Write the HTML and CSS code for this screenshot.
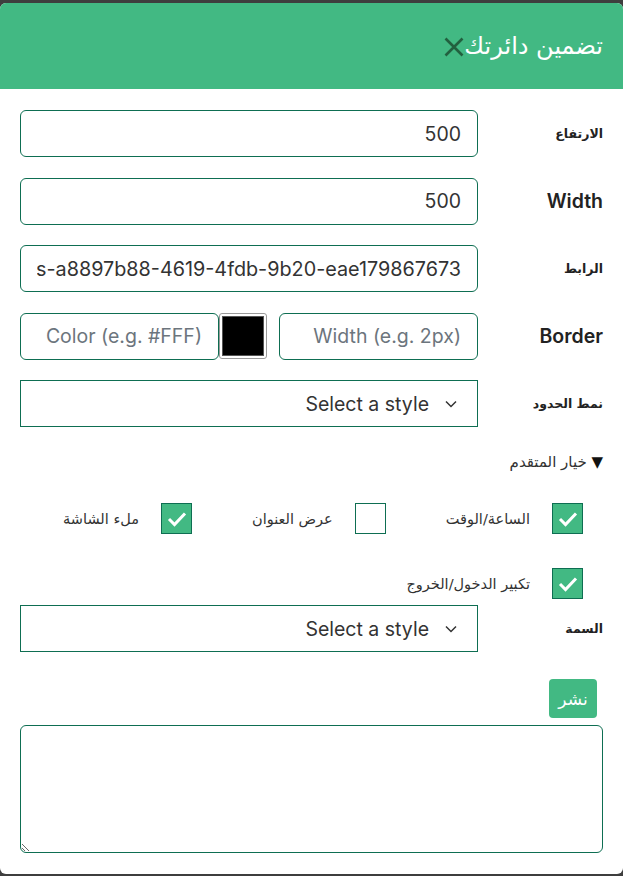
FILE: index.html
```html
<!DOCTYPE html>
<html lang="ar" dir="rtl">
<head>
<meta charset="utf-8">
<title>تضمين دائرتك</title>
<link rel="stylesheet" href="styles.css">
</head>
<body>
<div class="modal">
  <header class="modal-header">
    <h2 class="modal-title">تضمين دائرتك</h2>
    <button class="close-btn" type="button" aria-label="close">
      <svg width="20" height="20" viewBox="0 0 20 20"><path d="M1.5 1.5 L18.5 18.5 M18.5 1.5 L1.5 18.5" stroke="#22603f" stroke-width="2.6" fill="none"/></svg>
    </button>
  </header>
  <div class="modal-body">
    <div class="form-row">
      <label class="label label-ar">الارتفاع</label>
      <div class="field"><input class="input" type="text" value="500"></div>
    </div>
    <div class="form-row">
      <label class="label label-en">Width</label>
      <div class="field"><input class="input" type="text" value="500"></div>
    </div>
    <div class="form-row">
      <label class="label label-ar">الرابط</label>
      <div class="field"><div class="input url-box"><div class="url-clip"><span class="url-text">clocks-a8897b88-4619-4fdb-9b20-eae179867673</span></div></div></div>
    </div>
    <div class="form-row">
      <label class="label label-en">Border</label>
      <div class="field border-field">
        <input class="input input-half" type="text" placeholder="Width (e.g. 2px)">
        <div class="swatch"><div class="swatch-inner"></div></div>
        <input class="input input-half" type="text" placeholder="Color (e.g. #FFF)">
      </div>
    </div>
    <div class="form-row">
      <label class="label label-ar">نمط الحدود</label>
      <div class="field">
        <div class="select"><span>Select a style</span><svg width="12" height="8" viewBox="0 0 12 8"><path d="M1 1.5 L6 6.5 L11 1.5" stroke="#333" stroke-width="1.5" fill="none"/></svg></div>
      </div>
    </div>
    <div class="advanced">
      <div class="summary"><span class="tri">▼</span> خيار المتقدم</div>
      <div class="checks">
        <div class="check-item"><span class="box checked"><svg width="20" height="16" viewBox="0 0 20 16"><path d="M2 8 L7.5 13.5 L18 2.5" stroke="#fff" stroke-width="3" fill="none"/></svg></span><span class="check-label">الساعة/الوقت</span></div>
        <div class="check-item"><span class="box"></span><span class="check-label">عرض العنوان</span></div>
        <div class="check-item"><span class="box checked"><svg width="20" height="16" viewBox="0 0 20 16"><path d="M2 8 L7.5 13.5 L18 2.5" stroke="#fff" stroke-width="3" fill="none"/></svg></span><span class="check-label">ملء الشاشة</span></div>
        <div class="check-item"><span class="box checked"><svg width="20" height="16" viewBox="0 0 20 16"><path d="M2 8 L7.5 13.5 L18 2.5" stroke="#fff" stroke-width="3" fill="none"/></svg></span><span class="check-label">تكبير الدخول/الخروج</span></div>
      </div>
    </div>
    <div class="form-row theme-row">
      <label class="label label-ar">السمة</label>
      <div class="field">
        <div class="select"><span>Select a style</span><svg width="12" height="8" viewBox="0 0 12 8"><path d="M1 1.5 L6 6.5 L11 1.5" stroke="#333" stroke-width="1.5" fill="none"/></svg></div>
      </div>
    </div>
    <div class="publish-row"><button class="publish-btn" type="button">نشر</button></div>
    <textarea class="code-area"></textarea>
  </div>
</div>
</body>
</html>
```
FILE: styles.css
```css
* { box-sizing: border-box; }
html, body { margin: 0; padding: 0; }
body {
  background: #3e3e3e;
  font-family: Inter, "DejaVu Sans", sans-serif;
  color: #333;
  height: 876px;
  overflow: hidden;
}
.modal {
  margin-top: 3px;
  width: 623px;
  height: 871px;
  background: #fff;
  border-radius: 6px;
  overflow: hidden;
}
.modal-header {
  height: 86px;
  background: #42b983;
  display: flex;
  align-items: center;
  padding: 0 20px;
}
.modal-title {
  margin: 0;
  font-family: "DejaVu Sans", sans-serif;
  font-weight: normal;
  font-size: 24px;
  color: #fff;
  line-height: 1;
}
.close-btn {
  background: none;
  border: 0;
  padding: 0;
  margin: 2px 0 0;
  width: 20px;
  height: 20px;
  display: flex;
}
.modal-body {
  padding: 21px 20px 0;
}
.form-row {
  display: grid;
  grid-template-columns: 125px minmax(0, 1fr);
  align-items: center;
  margin-bottom: 20.5px;
}
.field { min-width: 0; }
.label {
  color: #222;
  text-align: right;
}
.label-ar {
  font-family: "DejaVu Sans", sans-serif;
  font-weight: bold;
  font-size: 12.5px;
}
.label-en {
  font-family: Inter, sans-serif;
  font-weight: 600;
  font-size: 19.5px;
}
.input {
  display: block;
  width: 100%;
  height: 47px;
  border: 1px solid #0e6e52;
  border-radius: 6px;
  padding: 0 16px;
  font-family: Inter, sans-serif;
  font-size: 19.5px;
  color: #333;
  direction: rtl;
  text-align: right;
  background: #fff;
  outline: none;
}
.input::placeholder { color: #6c757d; }
.url-box {
  display: flex;
  align-items: center;
}
.url-clip {
  flex: 1;
  min-width: 0;
  overflow: hidden;
  white-space: nowrap;
  display: flex;
  justify-content: flex-start;
}
.url-text { direction: ltr; flex: none; font-size: 19.8px; }
.border-field {
  display: flex;
  align-items: center;
}
.input-half {
  width: 199px;
  flex: none;
}
.border-field .input-half:first-child { margin-left: 12px; }
.swatch {
  width: 48px;
  height: 46px;
  flex: none;
  border: 1px solid #9a9a9a;
  border-radius: 3px;
  padding: 2px;
}
.swatch-inner {
  width: 100%;
  height: 100%;
  background: #000;
  border: 1px solid #555;
}
.select {
  height: 47px;
  border: 1px solid #0e6e52;
  display: flex;
  align-items: center;
  gap: 16px;
  padding: 0 20px;
  font-family: Inter, sans-serif;
  font-size: 19.5px;
  color: #333;
  flex-direction: row-reverse;
  justify-content: flex-end;
}
.advanced { margin-top: 25px; }
.summary {
  font-family: "DejaVu Sans", sans-serif;
  font-size: 15px;
  color: #333;
  line-height: 20px;
}
.tri { font-size: 15px; color: #111; }
.checks {
  display: flex;
  flex-wrap: wrap;
  column-gap: 60px;
  row-gap: 34px;
  padding: 31px 20px 0 0;
}
.check-item {
  display: flex;
  align-items: center;
  gap: 22px;
  height: 31px;
}
.box {
  width: 31px;
  height: 31px;
  border: 1px solid #0e6e52;
  background: #fff;
  display: flex;
  align-items: center;
  justify-content: center;
  flex: none;
}
.box.checked { background: #42b983; }
.check-label {
  font-family: "DejaVu Sans", sans-serif;
  font-size: 14.5px;
  color: #333;
}
.theme-row { margin-top: 6px; margin-bottom: 0; }
.publish-row {
  display: flex;
  padding: 27px 6px 0 0;
}
.publish-btn {
  background: #42b983;
  color: #fff;
  border: 0;
  border-radius: 4px;
  width: 48px;
  height: 39px;
  font-family: "DejaVu Sans", sans-serif;
  font-size: 17px;
  padding: 0;
}
.code-area {
  display: block;
  margin-top: 7px;
  width: 583px;
  height: 128px;
  border: 1px solid #0e6e52;
  border-radius: 6px;
  resize: vertical;
  outline: none;
}
```
